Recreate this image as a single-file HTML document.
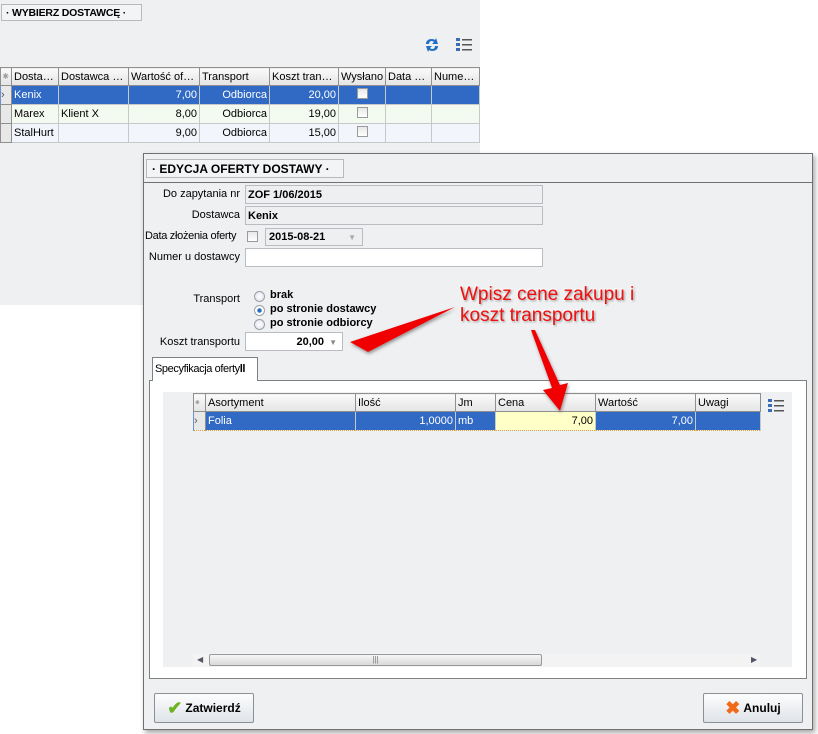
<!DOCTYPE html>
<html><head><meta charset="utf-8"><style>
*{box-sizing:border-box;margin:0;padding:0}
body{width:818px;height:734px;background:#fff;font-family:"Liberation Sans",sans-serif;font-size:11px;color:#000;position:relative;overflow:hidden}
.a{position:absolute}
.panel{left:0;top:0;width:480px;height:305px;background:#eff0f2}
.title{border:1px solid #b7b9bd;background:#f3f4f6;font-weight:bold;white-space:nowrap}
table{border-collapse:collapse;table-layout:fixed}
td{border:1px solid #c8c8c8;height:19px;padding:0 2px;white-space:nowrap;overflow:hidden}
th{border:1px solid #8f8f8f;background:linear-gradient(#fafafa,#e4e4e4);font-weight:normal;text-align:left;padding:0 2px;height:18px;white-space:nowrap;overflow:hidden}
.r{text-align:right}
.sel td{background:#316ac5;color:#fff;border-top:1px dotted #e3a33a;border-bottom:1px dotted #e3a33a;border-left-color:#6b8fd0}
.rh{background:#e8e8e8;border:1px solid #8f8f8f}
.cb{display:inline-block;width:11px;height:11px;border:1px solid #9a9a9a;background:linear-gradient(#e8e8e8,#fff)}
.lbl{text-align:right;width:100px;white-space:nowrap}
.inp{border:1px solid #b9bcc1;background:#eeeff1;font-weight:bold;padding:3px 2px}
.rad{width:11px;height:11px;border-radius:50%;border:1px solid #9aa0a8;background:radial-gradient(#fff,#dde)}
.btn{border:1px solid #8a9098;border-radius:2px;background:linear-gradient(#fdfdfd,#dfe3e8);font-weight:bold;font-size:12px;display:flex;align-items:center;justify-content:center;gap:3px}
.ann{color:#f01010;font-size:19px;line-height:21px;white-space:nowrap;text-shadow:1px 1px 2px #888,-1px -1px 0 #fff,1px -1px 0 #fff,-1px 1px 0 #fff}
</style></head><body>
<div class="a panel"></div>
<div class="a title" style="left:1px;top:4px;width:141px;height:17px;padding:2px 4px;font-size:10.5px;letter-spacing:-0.2px">· WYBIERZ DOSTAWCĘ ·</div>
<svg class="a" style="left:423px;top:37px" width="18" height="16" viewBox="0 0 18 16"><path d="M3 7 C3 2 9 1 12 3 L13 1 L15 7 L9 7 L11 5 C9 3 6 4 6 7Z" fill="#1f6fc8"/><path d="M15 9 C15 14 9 15 6 13 L5 15 L3 9 L9 9 L7 11 C9 13 12 12 12 9Z" fill="#1f6fc8"/></svg>
<svg class="a" style="left:456px;top:38px" width="16" height="14"><g fill="#3a6bb5"><rect x="0" y="0" width="4" height="3"/><rect x="0" y="5" width="4" height="3"/><rect x="0" y="10" width="4" height="3"/></g><g fill="#555"><rect x="6" y="1" width="10" height="1.5"/><rect x="6" y="6" width="10" height="1.5"/><rect x="6" y="11" width="10" height="1.5"/></g></svg>
<table class="a" style="left:0;top:67px;width:479px">
<colgroup><col style="width:11px"><col style="width:47px"><col style="width:70px"><col style="width:71px"><col style="width:70px"><col style="width:69px"><col style="width:47px"><col style="width:46px"><col style="width:48px"></colgroup>
<tr><th style="color:#999;padding:0">⁕</th><th>Dosta…</th><th>Dostawca …</th><th>Wartość of…</th><th>Transport</th><th>Koszt tran…</th><th>Wysłano</th><th>Data …</th><th>Nume…</th></tr>
<tr class="sel"><td class="rh" style="background:#e8e8e8;color:#555;padding:0">›</td><td>Kenix</td><td></td><td class="r">7,00</td><td class="r">Odbiorca</td><td class="r">20,00</td><td style="text-align:center"><span class="cb"></span></td><td></td><td></td></tr>
<tr style="background:#f3faf0"><td class="rh"></td><td>Marex</td><td>Klient X</td><td class="r">8,00</td><td class="r">Odbiorca</td><td class="r">19,00</td><td style="text-align:center"><span class="cb"></span></td><td></td><td></td></tr>
<tr style="background:#f2f6fc"><td class="rh"></td><td>StalHurt</td><td></td><td class="r">9,00</td><td class="r">Odbiorca</td><td class="r">15,00</td><td style="text-align:center"><span class="cb"></span></td><td></td><td></td></tr>
</table>

<div class="a" style="left:143px;top:153px;width:670px;height:577px;background:#eff0f2;border:1px solid #707070;box-shadow:2px 3px 5px rgba(0,0,0,.35)"></div>
<div class="a" style="left:144px;top:154px;width:668px;height:29px;border-bottom:1px solid #707070"></div>
<div class="a title" style="left:146px;top:159px;width:198px;height:19px;padding:2px 5px;font-size:12px">· EDYCJA OFERTY DOSTAWY ·</div>

<div class="a lbl" style="left:140px;top:188px">Do zapytania nr</div>
<div class="a inp" style="left:245px;top:185px;width:298px;height:19px">ZOF 1/06/2015</div>
<div class="a lbl" style="left:140px;top:209px">Dostawca</div>
<div class="a inp" style="left:245px;top:206px;width:298px;height:19px">Kenix</div>
<div class="a" style="left:145px;top:230px;letter-spacing:-0.3px">Data złożenia oferty</div>
<span class="a cb" style="left:247px;top:231px"></span>
<div class="a inp" style="left:265px;top:228px;width:98px;height:18px;padding:2px 3px">2015-08-21<span style="position:absolute;right:6px;color:#aaa;font-size:8px;top:4px">▼</span></div>
<div class="a lbl" style="left:140px;top:251px">Numer u dostawcy</div>
<div class="a inp" style="left:245px;top:248px;width:298px;height:19px;background:#fff"></div>

<div class="a lbl" style="left:140px;top:293px">Transport</div>
<div class="a rad" style="left:254px;top:291px"></div><div class="a" style="left:270px;top:289px;font-weight:bold">brak</div>
<div class="a rad" style="left:254px;top:305px;background:radial-gradient(#2a6fb8 30%,#fff 40%)"></div><div class="a" style="left:270px;top:303px;font-weight:bold">po stronie dostawcy</div>
<div class="a rad" style="left:254px;top:319px"></div><div class="a" style="left:270px;top:317px;font-weight:bold">po stronie odbiorcy</div>
<div class="a lbl" style="left:140px;top:336px">Koszt transportu</div>
<div class="a inp" style="left:245px;top:332px;width:98px;height:19px;background:#fff;text-align:right;padding-right:18px">20,00<span style="position:absolute;right:5px;color:#888;font-size:8px;top:5px">▼</span></div>

<div class="a" style="left:149px;top:380px;width:658px;height:299px;border:1px solid #808080;background:#fff"></div>
<div class="a" style="left:152px;top:357px;width:106px;height:24px;border:1px solid #808080;border-bottom:none;background:#fff;padding:5px 2px;white-space:nowrap;letter-spacing:-0.4px">Specyfikacja oferty<b>ll</b></div>
<div class="a" style="left:163px;top:392px;width:629px;height:275px;background:#eff0f2"></div>
<table class="a" style="left:193px;top:393px;width:567px">
<colgroup><col style="width:12px"><col style="width:150px"><col style="width:100px"><col style="width:40px"><col style="width:100px"><col style="width:100px"><col style="width:65px"></colgroup>
<tr><th style="color:#999;padding:0;font-size:8px">⁕</th><th>Asortyment</th><th>Ilość</th><th>Jm</th><th>Cena</th><th>Wartość</th><th>Uwagi</th></tr>
<tr class="sel"><td class="rh" style="background:#e8e8e8;color:#555;padding:0">›</td><td>Folia</td><td class="r">1,0000</td><td>mb</td><td class="r" style="background:#ffffc8;color:#000">7,00</td><td class="r">7,00</td><td></td></tr>
</table>
<svg class="a" style="left:768px;top:399px" width="16" height="14"><g fill="#3a6bb5"><rect x="0" y="0" width="4" height="3"/><rect x="0" y="5" width="4" height="3"/><rect x="0" y="10" width="4" height="3"/></g><g fill="#555"><rect x="6" y="1" width="10" height="1.5"/><rect x="6" y="6" width="10" height="1.5"/><rect x="6" y="11" width="10" height="1.5"/></g></svg>
<div class="a" style="left:193px;top:653px;width:567px;height:14px;background:#f3f3f3"></div>
<div class="a" style="left:197px;top:655px;color:#556;font-size:8px">◀</div>
<div class="a" style="left:751px;top:655px;color:#556;font-size:8px">▶</div>
<div class="a" style="left:209px;top:654px;width:333px;height:12px;border:1px solid #999;border-radius:2px;background:linear-gradient(#f6f6f6,#d8d8d8);text-align:center;font-size:8px;color:#777;line-height:10px">|||</div>

<div class="a btn" style="left:154px;top:693px;width:100px;height:30px"><span style="color:#6db31f;font-size:18px">✔</span>Zatwierdź</div>
<div class="a btn" style="left:703px;top:693px;width:100px;height:30px"><span style="color:#f06a1a;font-size:18px">✖</span>Anuluj</div>

<svg class="a" style="left:0;top:0" width="818" height="734"><defs><filter id="s"><feDropShadow dx="1" dy="2" stdDeviation="1.5" flood-color="#555" flood-opacity=".6"/></filter></defs>
<g fill="#f00000" filter="url(#s)"><polygon points="455,307 350,342 368,352"/><polygon points="531,330 535,330 560,385 568,383 560,411 543,390 552,388"/></g></svg>
<div class="a ann" style="left:460px;top:284px">Wpisz cene zakupu i<br>koszt transportu</div>
</body></html>
